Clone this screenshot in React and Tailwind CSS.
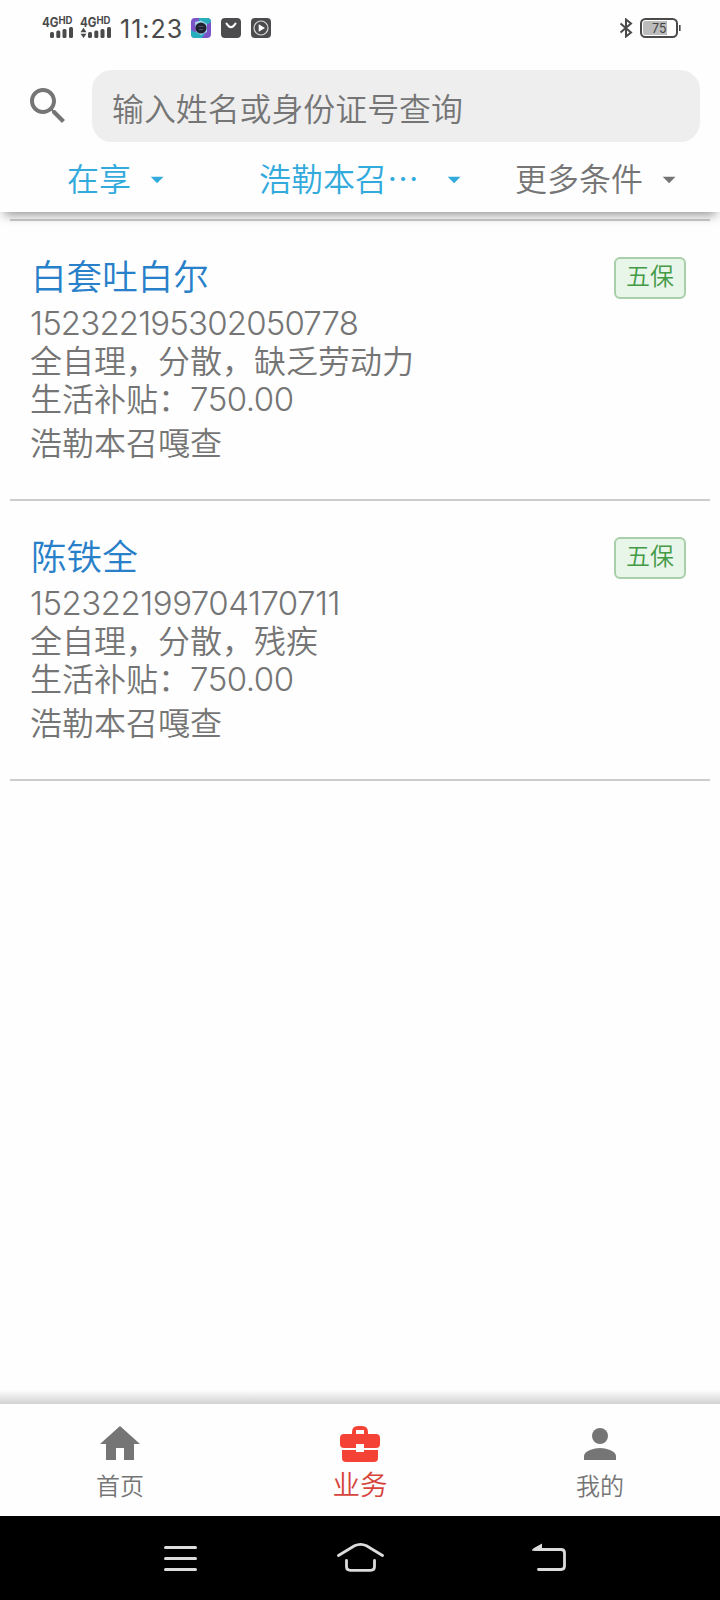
import React from "react";

const people = [
  { name: "白套吐白尔", id: "152322195302050778", idTracking: "tracking-[-0.85px]", status: "全自理，分散，缺乏劳动力", amount: "750.00", village: "浩勒本召嘎查", tag: "五保" },
  { name: "陈铁全", id: "152322199704170711", idTracking: "tracking-[-0.5px]", status: "全自理，分散，残疾", amount: "750.00", village: "浩勒本召嘎查", tag: "五保" },
];

function Signal({ arrows }) {
  return (
    <svg width="34" height="24" viewBox="0 0 34 24" fill="#4a4a4a">
      <text x="0" y="12" fontFamily="Inter, sans-serif" fontWeight="700" fontSize="12.5" textLength="16.5" lengthAdjust="spacingAndGlyphs">4G</text>
      <text x="16.5" y="9" fontFamily="Inter, sans-serif" fontWeight="700" fontSize="9.8" textLength="14" lengthAdjust="spacingAndGlyphs">HD</text>
      {arrows && <path d="M0.5 17.2l3-4.4 3 4.4zM0.5 18.8h6l-3 4.2z" />}
      <rect x="8" y="17" width="4" height="6" rx="1.5" />
      <rect x="14.3" y="15.5" width="4" height="7.5" rx="1.5" />
      <rect x="20.5" y="14" width="4" height="9" rx="1.5" />
      <rect x="27" y="12" width="4" height="11" rx="1.5" />
    </svg>
  );
}

function StatusBar() {
  return (
    <div className="flex h-[70px] shrink-0 items-start pr-[39px] pl-[42px] pt-[15px] text-[#4a4a4a]">
      <Signal />
      <div className="ml-[4px]"><Signal arrows /></div>
      <span className="ml-[6px] mt-px w-[64px] whitespace-nowrap font-[Inter,sans-serif] text-[25px] leading-[26px] font-normal tracking-[1px]">11:23</span>
      <div className="ml-[7px] mt-[3px] flex gap-[10px]">
        <svg width="20" height="20" viewBox="0 0 20 20">
          <rect width="20" height="20" rx="4" fill="#7b55c8" />
          <path d="M8 0H16Q20 0 20 4L17 6 8 5zM0 12L4 14 14 15 11 20H4Q0 20 0 16z" fill="#27aebd" />
          <path d="M4 4L10 2.5 16 6 16 14 10 17 5 14z" fill="#a9d6ee" />
          <circle cx="10" cy="10" r="5.6" fill="#20222f" />
          <path d="M7.5 8.5h5M8 11.5h4" stroke="#5d6180" strokeWidth="0.8" />
        </svg>
        <svg width="20" height="20" viewBox="0 0 20 20">
          <rect width="20" height="20" rx="4" fill="#4c4c4e" />
          <path d="M5.5 5.5Q10 13 14.5 5.5" fill="none" stroke="#fff" strokeWidth="2" strokeLinecap="round" />
        </svg>
        <svg width="20" height="20" viewBox="0 0 20 20">
          <rect width="20" height="20" rx="4" fill="#4c4c4e" />
          <circle cx="10" cy="10" r="7" fill="none" stroke="#d8d8d8" strokeWidth="1.2" />
          <path d="M7.7 6.2v7.6L14 10z" fill="#fff" />
        </svg>
      </div>
      <svg className="ml-auto mt-[3px]" width="14" height="20" viewBox="0 0 14 20" fill="none" stroke="#4a4a4a" strokeWidth="2">
        <path d="M1.5 5.5L12 14.5 7 18.5V1.5L12 5.5 1.5 14.5" />
      </svg>
      <svg className="ml-[6px] mt-[3px]" width="42" height="20" viewBox="-1 0 42 20">
        <rect x="1" y="1" width="36" height="18" rx="4.5" fill="#fff" stroke="#4a4a4a" strokeWidth="2" />
        <path d="M5.5 3H27V17H5.5Q3 17 3 14.5V5.5Q3 3 5.5 3z" fill="#bcbcbc" />
        <rect x="39" y="7" width="1.6" height="6" fill="#4a4a4a" />
        <text x="12" y="14.6" fontFamily="Inter, sans-serif" fontSize="12.5" fontWeight="400" fill="#444" textLength="14.5" lengthAdjust="spacingAndGlyphs">75</text>
      </svg>
    </div>
  );
}

function Caret() {
  return (
    <svg className="h-8 w-8 shrink-0" viewBox="0 0 32 32" fill="currentColor">
      <path d="M9.7 15.7h12.8L16.1 22.2z" />
    </svg>
  );
}

function Header() {
  return (
    <header className="relative z-10 flex h-[212px] shrink-0 flex-col bg-[#fefefe] shadow-[0_7px_10px_-4px_rgba(0,0,0,0.42)]">
      <StatusBar />
      <div className="flex h-[72px] shrink-0 items-center pr-5 pl-6">
        <svg className="h-12 w-12 shrink-0" viewBox="0 0 24 24" fill="#757575">
          <path d="M15.5 14h-.79l-.28-.27C15.41 12.59 16 11.11 16 9.5 16 5.91 13.09 3 9.5 3S3 5.91 3 9.5 5.91 16 9.5 16c1.61 0 3.09-.59 4.23-1.57l.27.28v.79l5 4.99L20.49 19l-4.99-5zm-6 0C7.01 14 5 11.99 5 9.5S7.01 5 9.5 5 14 7.01 14 9.5 11.99 14 9.5 14z" />
        </svg>
        <div className="ml-5 h-[72px] flex-1 rounded-[20px] bg-[#eeeeee] pt-px pl-5 text-[31.9px] leading-[72px]">输入姓名或身份证号查询</div>
      </div>
      <div className="grid grid-cols-3 text-[32px] leading-[70px] whitespace-nowrap">
        <div className="flex h-[70px] items-center gap-[10px] pl-[67px] text-[#33aadc]">在享<Caret /></div>
        <div className="flex h-[70px] items-center justify-between pr-[10px] pl-[19px] text-[#33aadc]">浩勒本召…<Caret /></div>
        <div className="flex h-[70px] items-center justify-center gap-[10px]">更多条件<Caret /></div>
      </div>
    </header>
  );
}

function Person({ person }) {
  return (
    <li className="flex h-[280px] items-start justify-between border-b-2 border-[#cccccc] pr-6 pl-5 pt-[30px] text-[32px] leading-[38px]">
      <div>
        <h2 className="mb-[5px] h-[48px] pl-px text-[35.6px] leading-[48px] text-[#2780c9]">{person.name}</h2>
        <p className={`h-[37px] font-[Inter,sans-serif] text-[33px] leading-[38px] font-light ${person.idTracking}`}>{person.id}</p>
        <p className="leading-[37px]">{person.status}</p>
        <p className="h-[38px]">生活补贴：<span className="font-[Inter,sans-serif] text-[33px] font-light tracking-[-0.5px]">{person.amount}</span></p>
        <p className="mt-[6px]">{person.village}</p>
      </div>
      <span className="mt-[6px] h-[42px] w-[72px] rounded-md border-2 border-[#a9cfab] bg-[#e8f5e9] text-center text-[24px] leading-[32px] text-[#439a47]">{person.tag}</span>
    </li>
  );
}

function TabBar() {
  return (
    <nav className="relative grid h-[112px] shrink-0 grid-cols-3 bg-[#fefefe]">
      <div className="absolute bottom-full h-[14px] w-full bg-linear-to-t from-[#d2d2d2] to-[#fefefe]" />
      <div className="flex flex-col items-center pt-4 text-[24px] leading-[34px]">
        <svg className="h-12 w-12" viewBox="0 0 24 24" fill="#757575"><path d="M10 20v-6h4v6h5v-8h3L12 3 2 12h3v8z" /></svg>
        首页
      </div>
      <div className="flex flex-col items-center pt-4 text-[27.5px] leading-[31px] text-[#d5453c]">
        <svg className="h-12 w-12" viewBox="0 0 48 48" fill="#f44336">
          <path fillRule="evenodd" d="M16 14v-2q0-6 6-6h4q6 0 6 6v2h8q4 0 4 4v6q0 4-4 4H28v-4h-8v4H8q-4 0-4-4v-6q0-4 4-4zM20 14h8v-4h-8z" />
          <path d="M6 30h14v2h8v-2h14v8q0 4-4 4H10q-4 0-4-4z" />
        </svg>
        业务
      </div>
      <div className="flex flex-col items-center pt-4 text-[24px] leading-[34px]">
        <svg className="h-12 w-12" viewBox="0 0 24 24" fill="#757575"><circle cx="12" cy="8" r="4" /><path d="M12 14c-2.67 0-8 1.34-8 4v2h16v-2c0-2.66-5.33-4-8-4z" /></svg>
        我的
      </div>
    </nav>
  );
}

function SystemBar() {
  return (
    <div className="flex h-[84px] shrink-0 items-center bg-black pl-[157px]">
      <svg width="48" height="48" viewBox="157 1534 48 48" fill="none" stroke="#dcdcdc" strokeWidth="3" strokeLinecap="round">
        <path d="M165.5 1547.5H195.5M165.5 1558.5H195.5M165.5 1569.5H195.5" />
      </svg>
      <svg className="ml-[132px]" width="48" height="48" viewBox="337 1534 48 48" fill="none" stroke="#dcdcdc" strokeWidth="2.8" strokeLinecap="round">
        <path d="M338.5 1555.5L354.5 1545.8Q360.5 1543 366.5 1545.8L382.5 1555.5M346.5 1560.5V1566.5Q346.5 1570.3 350.5 1570.3H370.5Q374.5 1570.3 374.5 1566.5V1560.5" />
      </svg>
      <svg className="ml-[140px]" width="48" height="48" viewBox="525 1534 48 48" fill="none" stroke="#dcdcdc" strokeWidth="2.8" strokeLinecap="round">
        <path d="M535 1549.5H561Q564.5 1549.5 564.5 1553V1566Q564.5 1569.5 561 1569.5H538.5" />
        <path d="M532 1550.8Q532 1549 534 1548L542 1543.5V1550.8z" fill="#dcdcdc" stroke="none" />
      </svg>
    </div>
  );
}

export default function App() {
  return (
    <div lang="zh-CN" className="flex h-[1600px] w-[720px] flex-col overflow-hidden bg-[#fefefe] font-['Noto_Sans_CJK_SC',sans-serif] font-[350] text-[#757575]">
      <Header />
      <ul className="mx-[10px] mt-[7px] flex-1">
        <li className="h-[2px] bg-[#cccccc]" />
        {people.map((person) => <Person key={person.id} person={person} />)}
      </ul>
      <TabBar />
      <SystemBar />
    </div>
  );
}
